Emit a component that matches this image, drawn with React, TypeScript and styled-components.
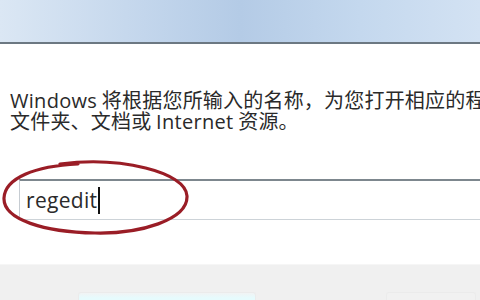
import styled, { createGlobalStyle } from "styled-components";

const GlobalStyles = createGlobalStyle`
  * { margin: 0; padding: 0; box-sizing: border-box; }
  body {
    width: 480px;
    height: 300px;
    overflow: hidden;
    background: #ffffff;
    font-family: "Open Sans", "Noto Sans CJK SC", sans-serif;
  }
`;

const Window = styled.div`
  width: 480px;
  height: 300px;
  display: flex;
  flex-direction: column;
  overflow: hidden;
`;

const TitleBar = styled.div`
  height: 44px;
  flex-shrink: 0;
  background: linear-gradient(90deg, #dbe7f4 0%, #c3d6ec 30%, #b4cbe6 50%, #c4d8ee 75%, #d3e2f3 100%);
  border-bottom: 2px solid #6c7882;
  box-shadow: 0 1px 0 #c9d2da;
`;

const Body = styled.div`
  flex: 1;
  background: #ffffff;
  padding: 45px 0 0 10px;
  display: flex;
  flex-direction: column;
`;

const Line = styled.div`
  height: 21px;
  line-height: 21px;
  font-family: "Noto Sans CJK SC", sans-serif;
  font-size: 20px;
  letter-spacing: 0.2px;
  color: #2a2a2a;
  white-space: nowrap;
`;

const Latin = styled.span`
  font-family: "Open Sans", sans-serif;
  line-height: 21px;
  letter-spacing: 0.3px;
`;

const InputRow = styled.div`
  position: relative;
  margin: 48px 0 0 9px;
  height: 41px;
`;

const Field = styled.div`
  height: 41px;
  width: 480px;
  border-top: 2px solid #7d878e;
  border-left: 1px solid #c6ccd2;
  border-bottom: 1px solid #cdd3d8;
  background: #ffffff;
  display: flex;
  align-items: center;
  padding-left: 6px;
  font-family: "Open Sans", sans-serif;
  font-size: 21px;
  letter-spacing: 0.3px;
  color: #2b2b2b;
`;

const Caret = styled.span`
  display: inline-block;
  width: 2px;
  height: 27px;
  background: #111;
  margin-left: 1px;
`;

const Circle = styled.svg`
  position: absolute;
  left: -19px;
  top: -21px;
  pointer-events: none;
`;

const Footer = styled.div`
  height: 36px;
  flex-shrink: 0;
  background: #f0f0f0;
  border-top: 1px solid #f6f6f6;
  display: flex;
  align-items: flex-end;
  padding-left: 78px;
  gap: 130px;
`;

const Button = styled.div<{ $w: number; $glow?: boolean }>`
  width: ${(p) => p.$w}px;
  height: 8px;
  border: 1px solid #ebebeb;
  border-bottom: none;
  border-radius: 3px 3px 0 0;
  background: ${(p) =>
    p.$glow ? "linear-gradient(180deg, #f1f3f4 0%, #e6fbfd 70%)" : "#f1f1f1"};
`;

export default function App() {
  return (
    <>
      <GlobalStyles />
      <Window>
        <TitleBar />
        <Body>
          <Line>
            <Latin>Windows</Latin> 将根据您所输入的名称，为您打开相应的程序、
          </Line>
          <Line>
            文件夹、文档或 <Latin>Internet</Latin> 资源。
          </Line>
          <InputRow>
            <Field>
              regedit<Caret />
            </Field>
            <Circle width="194" height="80" viewBox="0 0 194 80">
              <path
                d="M60 6 C 120 -2, 186 14, 187 38 C 188 62, 140 76, 95 75 C 45 74, 3 62, 4 40 C 5 20, 35 8, 78 6"
                fill="none"
                stroke="#9a1d26"
                strokeWidth="3.2"
                strokeLinecap="round"
              />
            </Circle>
          </InputRow>
        </Body>
        <Footer>
          <Button $w={178} $glow />
          <Button $w={90} />
        </Footer>
      </Window>
    </>
  );
}
